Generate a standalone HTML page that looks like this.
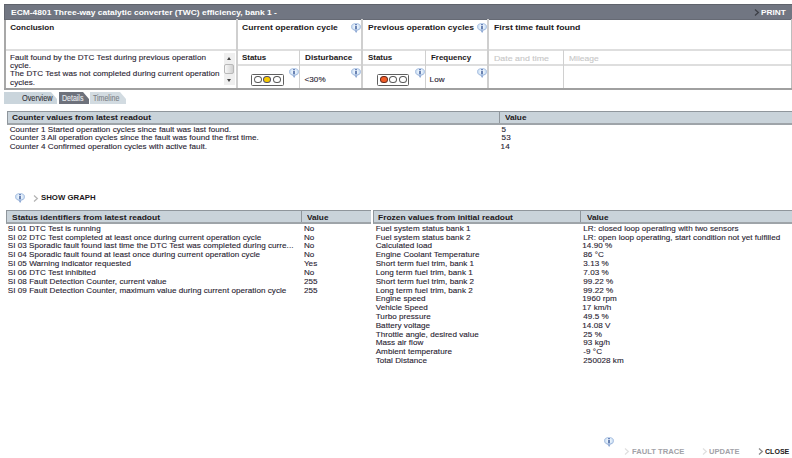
<!DOCTYPE html>
<html><head><meta charset="utf-8">
<style>
*{margin:0;padding:0;box-sizing:border-box}
html,body{width:792px;height:458px;overflow:hidden;background:#fff;position:relative}
body{font-family:"Liberation Sans",sans-serif;font-size:8.1px;color:#38323e}
.a{position:absolute}
.t{position:absolute;white-space:nowrap;line-height:10px;transform-origin:0 0}
.t:not(.b){-webkit-text-stroke:0.12px currentColor}
.b{font-weight:bold}
.vl{position:absolute;width:2px;background:#d4d4d4}
.hl{position:absolute;height:2px;background:#dedede}
.th{position:absolute;background:#c9d3da;border-top:1px solid #8f969c;border-bottom:2px solid #9ea4a9;border-left:1px solid #8f969c}
.info{position:absolute;width:10px;height:10px}
</style></head><body>

<!-- header bar -->
<div class="a" style="left:4px;top:4px;width:788px;height:16px;background:#717682;border-top:1px solid #5f636c;border-bottom:1px solid #666a74;border-left:1px solid #62666f"></div>
<svg class="a" style="left:753.5px;top:8.5px" width="6" height="7" viewBox="0 0 6 7"><path d="M1 0.6L4.3 3.5L1 6.4" fill="none" stroke="#3c3f46" stroke-width="1.3"/></svg>

<!-- top table -->
<div class="a" style="left:4px;top:20px;width:2px;height:70px;background:#a8a8a8"></div>
<div class="a" style="left:791px;top:19px;width:1px;height:71px;background:#bdbdbd"></div>
<div class="a" style="left:4px;top:88px;width:788px;height:2px;background:#a0a0a0"></div>
<div class="hl" style="left:6px;top:48.5px;width:785px;height:2px"></div>
<div class="hl" style="left:237px;top:64px;width:554px"></div>
<div class="vl" style="left:236px;top:19px;height:69px;background:#cfcfcf"></div>
<div class="vl" style="left:361px;top:19px;height:69px;background:#cfcfcf"></div>
<div class="vl" style="left:487px;top:19px;height:69px;background:#cfcfcf"></div>
<div class="vl" style="left:299px;top:50px;height:38px;width:1px;background:#d0d0d0"></div>
<div class="vl" style="left:425px;top:50px;height:38px;width:1px;background:#d0d0d0"></div>
<div class="vl" style="left:563px;top:50px;height:38px;width:1px;background:#d0d0d0"></div>

<!-- scrollbar -->
<div class="a" style="left:224px;top:53px;width:11px;height:32px;background:#efefef"></div>
<div class="a" style="left:224px;top:64px;width:10px;height:10px;background:linear-gradient(90deg,#f8f8f8,#d0d0d0);border:1px solid #b8b8b8;border-radius:2px"></div>
<div class="a" style="left:227px;top:57px;width:0;height:0;border-left:2.5px solid transparent;border-right:2.5px solid transparent;border-bottom:3px solid #444"></div>
<div class="a" style="left:227px;top:79px;width:0;height:0;border-left:2.5px solid transparent;border-right:2.5px solid transparent;border-top:3px solid #444"></div>

<!-- traffic lights -->
<div class="a" style="left:251px;top:74px;width:32.5px;height:11.5px;border:1px solid #606060;border-radius:1.5px;background:#fff"></div>
<div class="a" style="left:254px;top:75.7px;width:8px;height:7.8px;border:1px solid #5a5a5a;border-radius:50%"></div>
<div class="a" style="left:263.4px;top:75.7px;width:8px;height:7.8px;border:1px solid #50506a;border-radius:50%;background:#f6c800"></div>
<div class="a" style="left:272.8px;top:75.7px;width:8px;height:7.8px;border:1px solid #5a5a5a;border-radius:50%"></div>
<div class="a" style="left:377px;top:74px;width:32px;height:11.5px;border:1px solid #606060;border-radius:1.5px;background:#fff"></div>
<div class="a" style="left:380px;top:75.7px;width:8px;height:7.8px;border:1px solid #6a2a1a;border-radius:50%;background:#f25c26"></div>
<div class="a" style="left:389.3px;top:75.7px;width:8px;height:7.8px;border:1px solid #5a5a5a;border-radius:50%"></div>
<div class="a" style="left:398.8px;top:75.7px;width:8px;height:7.8px;border:1px solid #5a5a5a;border-radius:50%"></div>

<!-- tabs -->
<div class="a" style="left:4px;top:92px;width:53px;height:12px;background:#cad5dc;clip-path:polygon(0 0,47px 0,53px 7px,53px 100%,0 100%)"></div>
<div class="a" style="left:59px;top:92px;width:30px;height:12px;background:#6e727c;clip-path:polygon(0 0,24px 0,30px 7px,30px 100%,0 100%)"></div>
<div class="a" style="left:90px;top:92px;width:36px;height:12px;background:#d2dbe1;clip-path:polygon(0 0,30px 0,36px 7px,36px 100%,0 100%)"></div>

<!-- table headers -->
<div class="th" style="left:7px;top:111px;width:785px;height:14px"></div>
<div class="a" style="left:499px;top:112px;width:1px;height:11px;background:#8f969c"></div>
<div class="th" style="left:6px;top:210px;width:365px;height:14px"></div>
<div class="a" style="left:301px;top:211px;width:1px;height:11px;background:#8f969c"></div>
<div class="th" style="left:373px;top:210px;width:419px;height:14px"></div>
<div class="a" style="left:580px;top:211px;width:1px;height:11px;background:#8f969c"></div>

<!-- chevrons -->
<svg class="a" style="left:33px;top:195px" width="6" height="7" viewBox="0 0 6 7"><path d="M1 0.6L4.3 3.5L1 6.4" fill="none" stroke="#b4b4b4" stroke-width="1.3"/></svg>
<svg class="a" style="left:624px;top:448px" width="6" height="7" viewBox="0 0 6 7"><path d="M1 0.6L4.3 3.5L1 6.4" fill="none" stroke="#e0e0e0" stroke-width="1.3"/></svg>
<svg class="a" style="left:701.5px;top:448px" width="6" height="7" viewBox="0 0 6 7"><path d="M1 0.6L4.3 3.5L1 6.4" fill="none" stroke="#e0e0e0" stroke-width="1.3"/></svg>
<svg class="a" style="left:757.5px;top:448px" width="6" height="7" viewBox="0 0 6 7"><path d="M1 0.6L4.3 3.5L1 6.4" fill="none" stroke="#8a8a8a" stroke-width="1.3"/></svg>

<div class="t b" style="left:10.80px;top:7.70px;font-size:8.1px;color:#ffffff;transform:scaleX(1.0431)">ECM-4801 Three-way catalytic converter (TWC) efficiency, bank 1 -</div>
<div class="t b" style="left:761.40px;top:7.60px;font-size:8.1px;color:#ffffff;transform:scaleX(1.0208)">PRINT</div>
<div class="t b" style="left:10.20px;top:22.80px;font-size:8.1px;color:#1c1820">Conclusion</div>
<div class="t b" style="left:241.60px;top:22.80px;font-size:8.1px;color:#1c1820;transform:scaleX(1.0549)">Current operation cycle</div>
<div class="t b" style="left:367.60px;top:22.80px;font-size:8.1px;color:#1c1820;transform:scaleX(1.0570)">Previous operation cycles</div>
<div class="t b" style="left:493.80px;top:22.80px;font-size:8.1px;color:#1c1820;transform:scaleX(1.0737)">First time fault found</div>
<div class="t b" style="left:241.60px;top:52.80px;font-size:8.1px;color:#1c1820;transform:scaleX(0.9800)">Status</div>
<div class="t b" style="left:304.90px;top:52.80px;font-size:8.1px;color:#1c1820;transform:scaleX(1.0106)">Disturbance</div>
<div class="t b" style="left:367.80px;top:52.80px;font-size:8.1px;color:#1c1820;transform:scaleX(0.9800)">Status</div>
<div class="t b" style="left:430.90px;top:52.80px;font-size:8.1px;color:#1c1820;transform:scaleX(0.9805)">Frequency</div>
<div class="t" style="left:493.80px;top:54.00px;font-size:8.1px;color:#c8c8c8;transform:scaleX(1.0900)">Date and time</div>
<div class="t" style="left:569.00px;top:54.00px;font-size:8.1px;color:#c8c8c8;transform:scaleX(1.0464)">Mileage</div>
<div class="t" style="left:10.10px;top:53.00px;font-size:8.1px;color:#2a2432;letter-spacing:0.031px">Fault found by the DTC Test during previous operation</div>
<div class="t" style="left:10.10px;top:61.20px;font-size:8.1px;color:#2a2432;letter-spacing:0.034px">cycle.</div>
<div class="t" style="left:10.10px;top:69.40px;font-size:8.1px;color:#2a2432;letter-spacing:0.032px">The DTC Test was not completed during current operation</div>
<div class="t" style="left:10.10px;top:77.60px;font-size:8.1px;color:#2a2432;letter-spacing:0.034px">cycles.</div>
<div class="t" style="left:304.50px;top:75.00px;font-size:8.1px;color:#2a2432;letter-spacing:0.059px">&lt;30%</div>
<div class="t" style="left:429.60px;top:75.00px;font-size:8.1px;color:#2a2432;letter-spacing:0.063px">Low</div>
<div class="t" style="left:21.80px;top:93.40px;font-size:8.6px;color:#34343a;transform:scaleX(0.8528)">Overview</div>
<div class="t" style="left:61.60px;top:93.30px;font-size:8.6px;color:#e8eaee;transform:scaleX(0.8154)">Details</div>
<div class="t" style="left:92.90px;top:93.30px;font-size:8.6px;color:#7c7f86;transform:scaleX(0.8187)">Timeline</div>
<div class="t b" style="left:12.40px;top:113.30px;font-size:8.1px;color:#1c1820;transform:scaleX(1.0373)">Counter values from latest readout</div>
<div class="t b" style="left:504.60px;top:113.30px;font-size:8.1px;color:#1c1820;transform:scaleX(1.0143)">Value</div>
<div class="t" style="left:9.70px;top:124.80px;font-size:8.1px;color:#2a2432;letter-spacing:0.030px">Counter 1 Started operation cycles since fault was last found.</div>
<div class="t" style="left:501.60px;top:124.80px;font-size:8.1px;color:#2a2432;letter-spacing:0.034px">5</div>
<div class="t" style="left:9.70px;top:133.40px;font-size:8.1px;color:#2a2432;letter-spacing:0.029px">Counter 3 All operation cycles since the fault was found the first time.</div>
<div class="t" style="left:501.60px;top:133.40px;font-size:8.1px;color:#2a2432;letter-spacing:0.075px">53</div>
<div class="t" style="left:9.70px;top:142.00px;font-size:8.1px;color:#2a2432;letter-spacing:0.030px">Counter 4 Confirmed operation cycles with active fault.</div>
<div class="t" style="left:500.60px;top:142.00px;font-size:8.1px;color:#2a2432;letter-spacing:0.067px">14</div>
<div class="t b" style="left:40.70px;top:193.10px;font-size:8.1px;color:#1c1820;transform:scaleX(0.9643)">SHOW GRAPH</div>
<div class="t b" style="left:11.50px;top:212.70px;font-size:8.1px;color:#1c1820;transform:scaleX(1.0482)">Status identifiers from latest readout</div>
<div class="t b" style="left:307.00px;top:212.70px;font-size:8.1px;color:#1c1820;transform:scaleX(1.0143)">Value</div>
<div class="t" style="left:7.80px;top:223.80px;font-size:8.1px;color:#2a2432;letter-spacing:0.032px">SI 01 DTC Test is running</div>
<div class="t" style="left:303.90px;top:223.80px;font-size:8.1px;color:#2a2432;letter-spacing:0.084px">No</div>
<div class="t" style="left:7.80px;top:232.62px;font-size:8.1px;color:#2a2432;letter-spacing:0.031px">SI 02 DTC Test completed at least once during current operation cycle</div>
<div class="t" style="left:303.90px;top:232.62px;font-size:8.1px;color:#2a2432;letter-spacing:0.084px">No</div>
<div class="t" style="left:7.80px;top:241.44px;font-size:8.1px;color:#2a2432;letter-spacing:0.030px">SI 03 Sporadic fault found last time the DTC Test was completed during curre...</div>
<div class="t" style="left:303.90px;top:241.44px;font-size:8.1px;color:#2a2432;letter-spacing:0.084px">No</div>
<div class="t" style="left:7.80px;top:250.26px;font-size:8.1px;color:#2a2432;letter-spacing:0.030px">SI 04 Sporadic fault found at least once during current operation cycle</div>
<div class="t" style="left:303.90px;top:250.26px;font-size:8.1px;color:#2a2432;letter-spacing:0.084px">No</div>
<div class="t" style="left:7.80px;top:259.08px;font-size:8.1px;color:#2a2432;letter-spacing:0.032px">SI 05 Warning indicator requested</div>
<div class="t" style="left:303.90px;top:259.08px;font-size:8.1px;color:#2a2432;letter-spacing:0.054px">Yes</div>
<div class="t" style="left:7.80px;top:267.90px;font-size:8.1px;color:#2a2432;letter-spacing:0.032px">SI 06 DTC Test inhibited</div>
<div class="t" style="left:303.90px;top:267.90px;font-size:8.1px;color:#2a2432;letter-spacing:0.084px">No</div>
<div class="t" style="left:7.80px;top:276.72px;font-size:8.1px;color:#2a2432;letter-spacing:0.031px">SI 08 Fault Detection Counter, current value</div>
<div class="t" style="left:303.90px;top:276.72px;font-size:8.1px;color:#2a2432;letter-spacing:0.054px">255</div>
<div class="t" style="left:7.80px;top:285.54px;font-size:8.1px;color:#2a2432;letter-spacing:0.031px">SI 09 Fault Detection Counter, maximum value during current operation cycle</div>
<div class="t" style="left:303.90px;top:285.54px;font-size:8.1px;color:#2a2432;letter-spacing:0.054px">255</div>
<div class="t b" style="left:378.40px;top:212.70px;font-size:8.1px;color:#1c1820;transform:scaleX(1.0415)">Frozen values from initial readout</div>
<div class="t b" style="left:586.50px;top:212.70px;font-size:8.1px;color:#1c1820;transform:scaleX(1.0143)">Value</div>
<div class="t" style="left:375.70px;top:223.80px;font-size:8.1px;color:#2a2432;letter-spacing:0.033px">Fuel system status bank 1</div>
<div class="t" style="left:583.30px;top:223.80px;font-size:8.1px;color:#2a2432;letter-spacing:0.031px">LR: closed loop operating with two sensors</div>
<div class="t" style="left:375.70px;top:232.62px;font-size:8.1px;color:#2a2432;letter-spacing:0.033px">Fuel system status bank 2</div>
<div class="t" style="left:583.30px;top:232.62px;font-size:8.1px;color:#2a2432;letter-spacing:0.029px">LR: open loop operating, start condition not yet fulfilled</div>
<div class="t" style="left:375.70px;top:241.44px;font-size:8.1px;color:#2a2432;letter-spacing:0.034px">Calculated load</div>
<div class="t" style="left:582.30px;top:241.44px;font-size:8.1px;color:#2a2432;letter-spacing:0.041px">14.90 %</div>
<div class="t" style="left:375.70px;top:250.26px;font-size:8.1px;color:#2a2432;letter-spacing:0.035px">Engine Coolant Temperature</div>
<div class="t" style="left:583.30px;top:250.26px;font-size:8.1px;color:#2a2432;letter-spacing:0.042px">86 °C</div>
<div class="t" style="left:375.70px;top:259.08px;font-size:8.1px;color:#2a2432;letter-spacing:0.030px">Short term fuel trim, bank 1</div>
<div class="t" style="left:583.30px;top:259.08px;font-size:8.1px;color:#2a2432;letter-spacing:0.042px">3.13 %</div>
<div class="t" style="left:375.70px;top:267.90px;font-size:8.1px;color:#2a2432;letter-spacing:0.031px">Long term fuel trim, bank 1</div>
<div class="t" style="left:583.30px;top:267.90px;font-size:8.1px;color:#2a2432;letter-spacing:0.042px">7.03 %</div>
<div class="t" style="left:375.70px;top:276.72px;font-size:8.1px;color:#2a2432;letter-spacing:0.030px">Short term fuel trim, bank 2</div>
<div class="t" style="left:583.30px;top:276.72px;font-size:8.1px;color:#2a2432;letter-spacing:0.042px">99.22 %</div>
<div class="t" style="left:375.70px;top:285.54px;font-size:8.1px;color:#2a2432;letter-spacing:0.031px">Long term fuel trim, bank 2</div>
<div class="t" style="left:583.30px;top:285.54px;font-size:8.1px;color:#2a2432;letter-spacing:0.042px">99.22 %</div>
<div class="t" style="left:375.70px;top:294.36px;font-size:8.1px;color:#2a2432;letter-spacing:0.037px">Engine speed</div>
<div class="t" style="left:582.30px;top:294.36px;font-size:8.1px;color:#2a2432;letter-spacing:0.040px">1960 rpm</div>
<div class="t" style="left:375.70px;top:303.18px;font-size:8.1px;color:#2a2432;letter-spacing:0.036px">Vehicle Speed</div>
<div class="t" style="left:582.30px;top:303.18px;font-size:8.1px;color:#2a2432;letter-spacing:0.039px">17 km/h</div>
<div class="t" style="left:375.70px;top:312.00px;font-size:8.1px;color:#2a2432;letter-spacing:0.035px">Turbo pressure</div>
<div class="t" style="left:583.30px;top:312.00px;font-size:8.1px;color:#2a2432;letter-spacing:0.042px">49.5 %</div>
<div class="t" style="left:375.70px;top:320.82px;font-size:8.1px;color:#2a2432;letter-spacing:0.032px">Battery voltage</div>
<div class="t" style="left:582.30px;top:320.82px;font-size:8.1px;color:#2a2432;letter-spacing:0.038px">14.08 V</div>
<div class="t" style="left:375.70px;top:329.64px;font-size:8.1px;color:#2a2432;letter-spacing:0.031px">Throttle angle, desired value</div>
<div class="t" style="left:583.30px;top:329.64px;font-size:8.1px;color:#2a2432;letter-spacing:0.053px">25 %</div>
<div class="t" style="left:375.70px;top:338.46px;font-size:8.1px;color:#2a2432;letter-spacing:0.034px">Mass air flow</div>
<div class="t" style="left:583.30px;top:338.46px;font-size:8.1px;color:#2a2432;letter-spacing:0.036px">93 kg/h</div>
<div class="t" style="left:375.70px;top:347.28px;font-size:8.1px;color:#2a2432;letter-spacing:0.035px">Ambient temperature</div>
<div class="t" style="left:583.30px;top:347.28px;font-size:8.1px;color:#2a2432;letter-spacing:0.038px">-9 °C</div>
<div class="t" style="left:375.70px;top:356.10px;font-size:8.1px;color:#2a2432;letter-spacing:0.033px">Total Distance</div>
<div class="t" style="left:583.30px;top:356.10px;font-size:8.1px;color:#2a2432;letter-spacing:0.042px">250028 km</div>
<div class="t b" style="left:631.90px;top:446.60px;font-size:8.1px;color:#a2a2a8;transform:scaleX(0.9411)">FAULT TRACE</div>
<div class="t b" style="left:709.30px;top:446.60px;font-size:8.1px;color:#a2a2a8;transform:scaleX(0.9303)">UPDATE</div>
<div class="t b" style="left:765.00px;top:446.60px;font-size:8.1px;color:#1c1820;transform:scaleX(0.8714)">CLOSE</div>

<!-- info icons -->
<svg width="0" height="0" style="position:absolute"><defs>
<radialGradient id="ig" cx="50%" cy="38%" r="62%"><stop offset="0" stop-color="#ffffff"/><stop offset="0.5" stop-color="#d8e8f8"/><stop offset="0.88" stop-color="#9fb9df"/><stop offset="1" stop-color="#6f90c8"/></radialGradient>

</defs></svg>
<svg class="info" style="left:351px;top:23px" viewBox="0 0 10 10"><path d="M5 0.3C7.8 0.3 9.8 1.9 9.8 3.8C9.8 5.5 8.3 6.9 6.3 7.2L5.1 9.6L3.9 7.2C1.8 6.9 0.2 5.5 0.2 3.8C0.2 1.9 2.2 0.3 5 0.3Z" fill="url(#ig)" stroke="#8ea8d4" stroke-width="0.4"/><path d="M1.3 5.9C2.1 6.8 3.1 7.2 4.1 7.35L5.1 9.6L6.1 7.35C7.2 7.2 8.3 6.7 8.9 5.8C8 6.4 7 6.8 5.9 6.9L5.1 8.3L4.3 6.9C3.2 6.8 2.2 6.5 1.3 5.9Z" fill="#6c8cc4"/><rect x="4.35" y="2.9" width="1.3" height="3.5" fill="#23458c"/><rect x="4.35" y="1.0" width="1.3" height="1.2" fill="#2e4f98"/></svg>
<svg class="info" style="left:477px;top:23px" viewBox="0 0 10 10"><path d="M5 0.3C7.8 0.3 9.8 1.9 9.8 3.8C9.8 5.5 8.3 6.9 6.3 7.2L5.1 9.6L3.9 7.2C1.8 6.9 0.2 5.5 0.2 3.8C0.2 1.9 2.2 0.3 5 0.3Z" fill="url(#ig)" stroke="#8ea8d4" stroke-width="0.4"/><path d="M1.3 5.9C2.1 6.8 3.1 7.2 4.1 7.35L5.1 9.6L6.1 7.35C7.2 7.2 8.3 6.7 8.9 5.8C8 6.4 7 6.8 5.9 6.9L5.1 8.3L4.3 6.9C3.2 6.8 2.2 6.5 1.3 5.9Z" fill="#6c8cc4"/><rect x="4.35" y="2.9" width="1.3" height="3.5" fill="#23458c"/><rect x="4.35" y="1.0" width="1.3" height="1.2" fill="#2e4f98"/></svg>
<svg class="info" style="left:289px;top:67.5px" viewBox="0 0 10 10"><path d="M5 0.3C7.8 0.3 9.8 1.9 9.8 3.8C9.8 5.5 8.3 6.9 6.3 7.2L5.1 9.6L3.9 7.2C1.8 6.9 0.2 5.5 0.2 3.8C0.2 1.9 2.2 0.3 5 0.3Z" fill="url(#ig)" stroke="#8ea8d4" stroke-width="0.4"/><path d="M1.3 5.9C2.1 6.8 3.1 7.2 4.1 7.35L5.1 9.6L6.1 7.35C7.2 7.2 8.3 6.7 8.9 5.8C8 6.4 7 6.8 5.9 6.9L5.1 8.3L4.3 6.9C3.2 6.8 2.2 6.5 1.3 5.9Z" fill="#6c8cc4"/><rect x="4.35" y="2.9" width="1.3" height="3.5" fill="#23458c"/><rect x="4.35" y="1.0" width="1.3" height="1.2" fill="#2e4f98"/></svg>
<svg class="info" style="left:350.5px;top:67.5px" viewBox="0 0 10 10"><path d="M5 0.3C7.8 0.3 9.8 1.9 9.8 3.8C9.8 5.5 8.3 6.9 6.3 7.2L5.1 9.6L3.9 7.2C1.8 6.9 0.2 5.5 0.2 3.8C0.2 1.9 2.2 0.3 5 0.3Z" fill="url(#ig)" stroke="#8ea8d4" stroke-width="0.4"/><path d="M1.3 5.9C2.1 6.8 3.1 7.2 4.1 7.35L5.1 9.6L6.1 7.35C7.2 7.2 8.3 6.7 8.9 5.8C8 6.4 7 6.8 5.9 6.9L5.1 8.3L4.3 6.9C3.2 6.8 2.2 6.5 1.3 5.9Z" fill="#6c8cc4"/><rect x="4.35" y="2.9" width="1.3" height="3.5" fill="#23458c"/><rect x="4.35" y="1.0" width="1.3" height="1.2" fill="#2e4f98"/></svg>
<svg class="info" style="left:414.5px;top:67.5px" viewBox="0 0 10 10"><path d="M5 0.3C7.8 0.3 9.8 1.9 9.8 3.8C9.8 5.5 8.3 6.9 6.3 7.2L5.1 9.6L3.9 7.2C1.8 6.9 0.2 5.5 0.2 3.8C0.2 1.9 2.2 0.3 5 0.3Z" fill="url(#ig)" stroke="#8ea8d4" stroke-width="0.4"/><path d="M1.3 5.9C2.1 6.8 3.1 7.2 4.1 7.35L5.1 9.6L6.1 7.35C7.2 7.2 8.3 6.7 8.9 5.8C8 6.4 7 6.8 5.9 6.9L5.1 8.3L4.3 6.9C3.2 6.8 2.2 6.5 1.3 5.9Z" fill="#6c8cc4"/><rect x="4.35" y="2.9" width="1.3" height="3.5" fill="#23458c"/><rect x="4.35" y="1.0" width="1.3" height="1.2" fill="#2e4f98"/></svg>
<svg class="info" style="left:477px;top:67.5px" viewBox="0 0 10 10"><path d="M5 0.3C7.8 0.3 9.8 1.9 9.8 3.8C9.8 5.5 8.3 6.9 6.3 7.2L5.1 9.6L3.9 7.2C1.8 6.9 0.2 5.5 0.2 3.8C0.2 1.9 2.2 0.3 5 0.3Z" fill="url(#ig)" stroke="#8ea8d4" stroke-width="0.4"/><path d="M1.3 5.9C2.1 6.8 3.1 7.2 4.1 7.35L5.1 9.6L6.1 7.35C7.2 7.2 8.3 6.7 8.9 5.8C8 6.4 7 6.8 5.9 6.9L5.1 8.3L4.3 6.9C3.2 6.8 2.2 6.5 1.3 5.9Z" fill="#6c8cc4"/><rect x="4.35" y="2.9" width="1.3" height="3.5" fill="#23458c"/><rect x="4.35" y="1.0" width="1.3" height="1.2" fill="#2e4f98"/></svg>
<svg class="info" style="left:15px;top:192.8px" viewBox="0 0 10 10"><path d="M5 0.3C7.8 0.3 9.8 1.9 9.8 3.8C9.8 5.5 8.3 6.9 6.3 7.2L5.1 9.6L3.9 7.2C1.8 6.9 0.2 5.5 0.2 3.8C0.2 1.9 2.2 0.3 5 0.3Z" fill="url(#ig)" stroke="#8ea8d4" stroke-width="0.4"/><path d="M1.3 5.9C2.1 6.8 3.1 7.2 4.1 7.35L5.1 9.6L6.1 7.35C7.2 7.2 8.3 6.7 8.9 5.8C8 6.4 7 6.8 5.9 6.9L5.1 8.3L4.3 6.9C3.2 6.8 2.2 6.5 1.3 5.9Z" fill="#6c8cc4"/><rect x="4.35" y="2.9" width="1.3" height="3.5" fill="#23458c"/><rect x="4.35" y="1.0" width="1.3" height="1.2" fill="#2e4f98"/></svg>
<svg class="info" style="left:604px;top:437px" viewBox="0 0 10 10"><path d="M5 0.3C7.8 0.3 9.8 1.9 9.8 3.8C9.8 5.5 8.3 6.9 6.3 7.2L5.1 9.6L3.9 7.2C1.8 6.9 0.2 5.5 0.2 3.8C0.2 1.9 2.2 0.3 5 0.3Z" fill="url(#ig)" stroke="#8ea8d4" stroke-width="0.4"/><path d="M1.3 5.9C2.1 6.8 3.1 7.2 4.1 7.35L5.1 9.6L6.1 7.35C7.2 7.2 8.3 6.7 8.9 5.8C8 6.4 7 6.8 5.9 6.9L5.1 8.3L4.3 6.9C3.2 6.8 2.2 6.5 1.3 5.9Z" fill="#6c8cc4"/><rect x="4.35" y="2.9" width="1.3" height="3.5" fill="#23458c"/><rect x="4.35" y="1.0" width="1.3" height="1.2" fill="#2e4f98"/></svg>

</body></html>
